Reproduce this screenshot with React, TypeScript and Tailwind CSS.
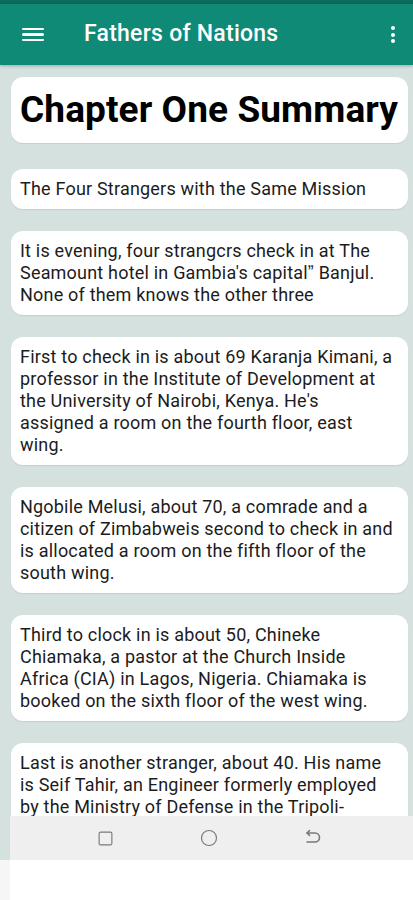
import { Square, Circle } from "lucide-react";

const paragraphs = [
  "The Four Strangers with the Same Mission",
  "It is evening, four strangcrs check in at The Seamount hotel in Gambia's capital\u02ee Banjul. None of them knows the other three",
  "First to check in is about 69 Karanja Kimani, a professor in the Institute of Development at the University of Nairobi, Kenya. He's assigned a room on the fourth floor, east wing.",
  "Ngobile Melusi, about 70, a comrade and a citizen of Zimbabweis second to check in and is allocated a room on the fifth floor of the south wing.",
  "Third to clock in is about 50, Chineke Chiamaka, a pastor at the Church Inside Africa (CIA) in Lagos, Nigeria. Chiamaka is booked on the sixth floor of the west wing.",
  "Last is another stranger, about 40. His name is Seif Tahir, an Engineer formerly employed by the Ministry of Defense in the Tripoli-\nLibya. He is given a room on the seventh floor.",
];

function BackIcon() {
  return (
    <svg width="20" height="20" viewBox="0 0 20 20" fill="none" stroke="#7a7a7a" strokeWidth="1.6" strokeLinecap="round" strokeLinejoin="round">
      <path d="M5 5h8a4.5 4.5 0 0 1 0 9H5" />
      <path d="M7.5 2.6 5 5l2.5 2.4" />
    </svg>
  );
}

export default function App() {
  return (
    <div className="w-[413px] h-[900px] overflow-hidden flex flex-col bg-white font-['Roboto',sans-serif]">
      <div className="h-[4px] bg-[#0a6a5c]" />
      <header className="h-[61px] bg-[#0f8a77] flex items-center text-white shadow-[0_1px_3px_rgba(0,0,0,0.25)] z-10">
        <div className="w-[22px] ml-[22px] flex flex-col gap-[3px]">
          <div className="h-[2.5px] bg-white rounded" />
          <div className="h-[2.5px] bg-white rounded" />
          <div className="h-[2.5px] bg-white rounded" />
        </div>
        <h1 className="ml-[40px] text-[23px] font-medium tracking-[0.25px]">Fathers of Nations</h1>
        <div className="ml-auto mr-[18px] flex flex-col gap-[2.5px]">
          <div className="w-[4px] h-[4px] rounded-full bg-white" />
          <div className="w-[4px] h-[4px] rounded-full bg-white" />
          <div className="w-[4px] h-[4px] rounded-full bg-white" />
        </div>
      </header>
      <main className="h-[751px] overflow-hidden bg-[#d4e1df] pl-[11px] pr-[5px] pt-[12px]">
        <div className="bg-white rounded-[12px] h-[66px] flex items-center px-[9px] shadow-[0_1px_1px_rgba(0,0,0,0.08)]">
          <h2 className="text-[37px] font-bold text-black tracking-[0.1px] whitespace-nowrap">Chapter One Summary</h2>
        </div>
        <div className="mt-[26px] flex flex-col gap-[22px]">
          {paragraphs.map((p, i) => (
            <div key={i} className="bg-white rounded-[12px] pl-[9px] pr-[12px] py-[9px] shadow-[0_1px_1px_rgba(0,0,0,0.08)]">
              <p className="text-[18px] leading-[22px] tracking-[0.2px] text-[#1c1c1c] whitespace-pre-line">{p}</p>
            </div>
          ))}
        </div>
      </main>
      <div className="h-[44px] flex">
        <div className="w-[10px] bg-[#d4e1df]" />
        <div className="flex-1 bg-[#efefef] flex items-center text-[#7a7a7a]">
          <div className="w-[190px] flex justify-end">
            <Square size={17} strokeWidth={1.6} className="mr-[86px]" />
          </div>
          <Circle size={18} strokeWidth={1.6} />
          <div className="ml-[84px]">
            <BackIcon />
          </div>
        </div>
      </div>
      <div className="flex-1 flex">
        <div className="w-[10px] bg-[#f6f6f6]" />
        <div className="flex-1 bg-white" />
      </div>
    </div>
  );
}
